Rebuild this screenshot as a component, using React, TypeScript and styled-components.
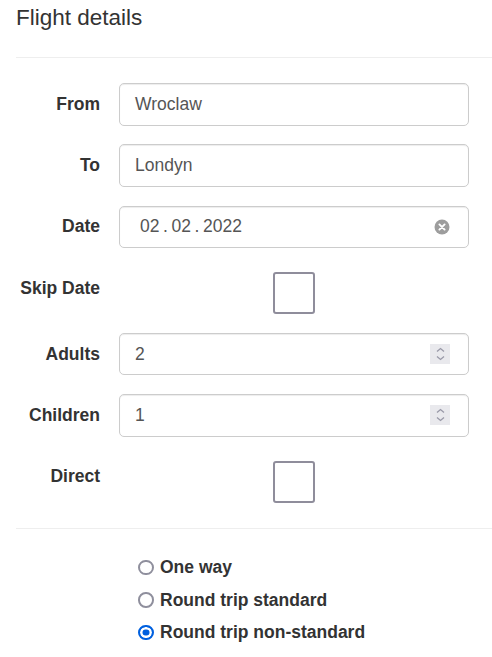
import React from "react";
import styled, { createGlobalStyle } from "styled-components";

const GlobalStyle = createGlobalStyle`
  html, body { margin: 0; padding: 0; background: #fff; }
  body {
    font-family: "Liberation Sans", Arial, Helvetica, sans-serif;
    font-size: 17.5px;
    line-height: 25px;
    color: #333;
  }
  * { box-sizing: border-box; }
`;

const Page = styled.div`
  padding: 6px 0 0 16px;
  width: 492px;
`;

const Title = styled.h4`
  margin: 0;
  font-size: 22.5px;
  line-height: 24.75px;
  font-weight: 400;
  color: #333;
`;

const Divider = styled.hr<{ $top: number }>`
  margin: ${(p) => p.$top}px 0 0;
  border: 0;
  border-top: 1px solid #eee;
  height: 0;
`;

const Form = styled.div`
  display: flex;
  flex-direction: column;
  gap: 18.75px;
  padding-top: 25px;
`;

const Row = styled.div`
  display: grid;
  grid-template-columns: 84px 350px;
  column-gap: 19px;
  align-items: start;
`;

const Label = styled.label`
  text-align: right;
  font-weight: 700;
  padding-top: 8.75px;
  line-height: 25px;
  color: #333;
  white-space: nowrap;
`;

const Field = styled.div<{ $trail?: boolean }>`
  height: 42.5px;
  display: flex;
  align-items: center;
  padding: 0 ${(p) => (p.$trail ? "18px" : "15px")} 0 15px;
  border: 1px solid #ccc;
  border-radius: 5px;
  box-shadow: inset 0 1px 1px rgba(0, 0, 0, 0.075);
  color: #555;
  background: #fff;
`;

const Value = styled.span`
  flex: 1;
`;

const DateValue = styled.span`
  flex: 1;
  display: flex;
  gap: 3.6px;
  padding-left: 5px;
`;

const Spinner = styled.span`
  flex: none;
  width: 20px;
  height: 20px;
  background: #e9e9ed;
  display: flex;
  align-items: center;
  justify-content: center;
`;

const CheckCell = styled.div`
  display: flex;
  justify-content: center;
  padding-top: 5.25px;
`;

const Checkbox = styled.input.attrs({ type: "checkbox" })`
  appearance: none;
  margin: 0;
  width: 42px;
  height: 42px;
  border: 2px solid #8f8d9b;
  border-radius: 3px;
  background: #fff;
`;

const RadioGroup = styled.div`
  display: flex;
  flex-direction: column;
  gap: 7.5px;
  padding: 26px 0 0 122px;
`;

const RadioLabel = styled.label`
  display: flex;
  align-items: center;
  gap: 6.5px;
  height: 25px;
  font-weight: 700;
  color: #333;
`;

const Radio = styled.input.attrs({ type: "radio" })`
  appearance: none;
  flex: none;
  margin: 0;
  width: 15.5px;
  height: 15.5px;
  border: 2px solid #8f8f9d;
  border-radius: 50%;
  background: #fff;
  &:checked {
    border-color: #0060df;
    background: #0060df;
    box-shadow: inset 0 0 0 2.5px #fff;
  }
`;

const ClearIcon = () => (
  <svg width="16" height="16" viewBox="0 0 16 16">
    <circle cx="8" cy="8" r="7.5" fill="#9d9d9d" />
    <path d="M5.4 5.4 L10.6 10.6 M10.6 5.4 L5.4 10.6" stroke="#fff" strokeWidth="1.9" strokeLinecap="round" />
  </svg>
);

const SpinIcon = () => (
  <svg width="20" height="20" viewBox="0 0 20 20">
    <path d="M7 7.5 L10.5 4.5 L14 7.5 M7 12.5 L10.5 15.5 L14 12.5" fill="none" stroke="#9999a8" strokeWidth="1.3" />
  </svg>
);

const TextRow = ({ label, value }: { label: string; value: string }) => (
  <Row>
    <Label>{label}</Label>
    <Field>
      <Value>{value}</Value>
    </Field>
  </Row>
);

const NumberRow = ({ label, value }: { label: string; value: string }) => (
  <Row>
    <Label>{label}</Label>
    <Field $trail>
      <Value>{value}</Value>
      <Spinner>
        <SpinIcon />
      </Spinner>
    </Field>
  </Row>
);

const CheckRow = ({ label }: { label: string }) => (
  <Row>
    <Label>{label}</Label>
    <CheckCell>
      <Checkbox readOnly />
    </CheckCell>
  </Row>
);

export default function App() {
  return (
    <Page>
      <GlobalStyle />
      <Title>Flight details</Title>
      <Divider $top={26.25} />
      <Form>
        <TextRow label="From" value="Wroclaw" />
        <TextRow label="To" value="Londyn" />
        <Row>
          <Label>Date</Label>
          <Field $trail>
            <DateValue>
              <span>02</span>
              <span>.</span>
              <span>02</span>
              <span>.</span>
              <span>2022</span>
            </DateValue>
            <ClearIcon />
          </Field>
        </Row>
        <CheckRow label="Skip Date" />
        <NumberRow label="Adults" value="2" />
        <NumberRow label="Children" value="1" />
        <CheckRow label="Direct" />
      </Form>
      <Divider $top={25.5} />
      <RadioGroup>
        <RadioLabel>
          <Radio name="trip" readOnly />
          One way
        </RadioLabel>
        <RadioLabel>
          <Radio name="trip" readOnly />
          Round trip standard
        </RadioLabel>
        <RadioLabel>
          <Radio name="trip" defaultChecked />
          Round trip non-standard
        </RadioLabel>
      </RadioGroup>
    </Page>
  );
}
